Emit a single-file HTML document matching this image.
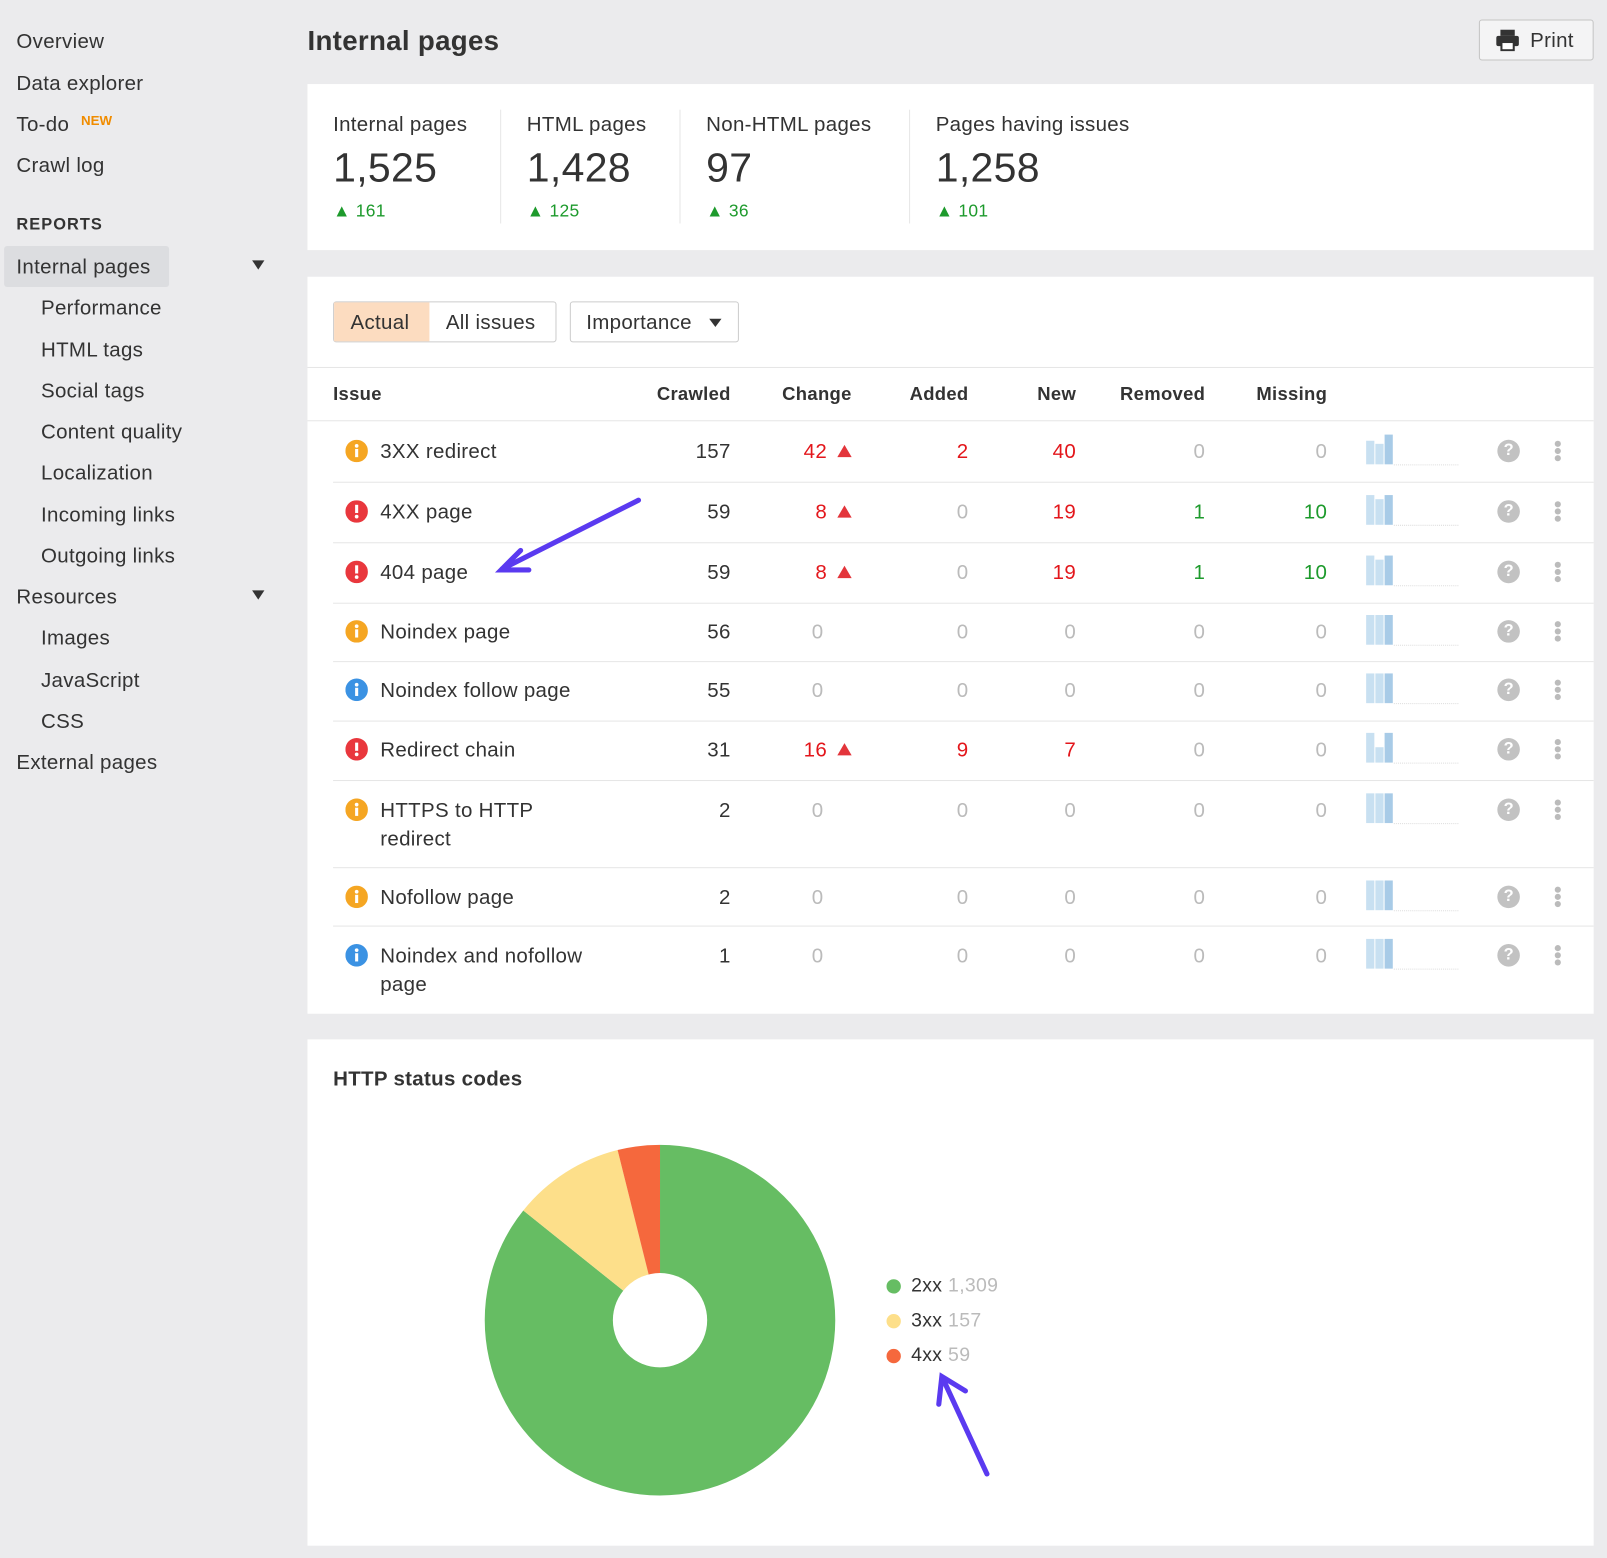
<!DOCTYPE html>
<html><head><meta charset="utf-8"><style>
html,body{margin:0;padding:0;background:#ebebed;width:1607px;height:1558px;overflow:hidden}
#w{position:absolute;left:0;top:0;width:1568px;height:1520px;transform:scale(1.02487,1.025);transform-origin:0 0;font-family:"Liberation Sans",Arial,sans-serif;color:#333;letter-spacing:0.3px}
.a{position:absolute;white-space:nowrap}
.s{font-size:20px;line-height:24px;margin-top:1px}
.card{position:absolute;background:#fff;left:300px;width:1255px}
.r{text-align:right}
.red{color:#e3161b}.grn{color:#1d9a2c}.z{color:#bbb}
.hd{font-weight:bold;font-size:18px}
.line{position:absolute;height:1px;background:#e6e6e6}
.tri{display:inline-block;width:0;height:0;border-left:7px solid transparent;border-right:7px solid transparent;border-bottom:12px solid #e3353b;margin-left:10px;vertical-align:1px}
</style></head><body><div id="w">
<div class="a s" style="left:16px;top:28px">Overview</div>
<div class="a s" style="left:16px;top:69px">Data explorer</div>
<div class="a s" style="left:16px;top:109px">To-do</div>
<div class="a" style="left:79px;top:110px;color:#f08c00;font-size:13px;font-weight:bold;letter-spacing:0">NEW</div>
<div class="a s" style="left:16px;top:149px">Crawl log</div>
<div class="a" style="left:16px;top:211px;font-size:16px;font-weight:bold;letter-spacing:1px">REPORTS</div>
<div class="a" style="left:4px;top:240px;width:161px;height:40px;background:#dcdde0;border-radius:3px"></div>
<div class="a s" style="left:16px;top:248px">Internal pages</div>
<div class="a" style="left:246px;top:254px;border-left:6px solid transparent;border-right:6px solid transparent;border-top:9px solid #333"></div>
<div class="a s" style="left:40px;top:288px">Performance</div>
<div class="a s" style="left:40px;top:329px">HTML tags</div>
<div class="a s" style="left:40px;top:369px">Social tags</div>
<div class="a s" style="left:40px;top:409px">Content quality</div>
<div class="a s" style="left:40px;top:449px">Localization</div>
<div class="a s" style="left:40px;top:490px">Incoming links</div>
<div class="a s" style="left:40px;top:530px">Outgoing links</div>
<div class="a s" style="left:16px;top:570px">Resources</div>
<div class="a" style="left:246px;top:576px;border-left:6px solid transparent;border-right:6px solid transparent;border-top:9px solid #333"></div>
<div class="a s" style="left:40px;top:610px">Images</div>
<div class="a s" style="left:40px;top:651px">JavaScript</div>
<div class="a s" style="left:40px;top:691px">CSS</div>
<div class="a s" style="left:16px;top:731px">External pages</div>

<div class="a" style="left:300px;top:25px;font-size:27px;font-weight:bold;color:#333">Internal pages</div>
<div class="a" style="left:1443px;top:19px;width:110px;height:38px;border:1px solid #c4c4c4;border-radius:3px;background:#f4f4f5"></div>
<svg class="a" style="left:1459px;top:28px" width="24" height="22" viewBox="0 0 24 22"><rect x="5" y="1" width="14" height="6" fill="#333"/><rect x="1" y="7" width="22" height="10" rx="2" fill="#333"/><rect x="6" y="13" width="12" height="8" fill="#fff" stroke="#333" stroke-width="2"/></svg>
<div class="a s" style="left:1493px;top:27px">Print</div>

<div class="card" style="top:82px;height:162px"></div>
<div class="a s" style="left:325px;top:109px">Internal pages</div>
<div class="a s" style="left:514px;top:109px">HTML pages</div>
<div class="a s" style="left:689px;top:109px">Non-HTML pages</div>
<div class="a s" style="left:913px;top:109px">Pages having issues</div>
<div class="a" style="left:325px;top:142px;font-size:40px">1,525</div>
<div class="a" style="left:514px;top:142px;font-size:40px">1,428</div>
<div class="a" style="left:689px;top:142px;font-size:40px">97</div>
<div class="a" style="left:913px;top:142px;font-size:40px">1,258</div>
<div class="a grn" style="left:325px;top:196px;font-size:17px">▲ 161</div>
<div class="a grn" style="left:514px;top:196px;font-size:17px">▲ 125</div>
<div class="a grn" style="left:689px;top:196px;font-size:17px">▲ 36</div>
<div class="a grn" style="left:913px;top:196px;font-size:17px">▲ 101</div>
<div class="a" style="left:488px;top:107px;width:1px;height:111px;background:#e6e6e6"></div>
<div class="a" style="left:663px;top:107px;width:1px;height:111px;background:#e6e6e6"></div>
<div class="a" style="left:887px;top:107px;width:1px;height:111px;background:#e6e6e6"></div>

<div class="card" style="top:270px;height:719px"></div>
<div class="a" style="left:325px;top:294px;width:216px;height:38px;border:1px solid #ccc;border-radius:3px"></div>
<div class="a" style="left:326px;top:295px;width:93px;height:38px;background:#fcdcc0"></div>
<div class="a s" style="left:342px;top:302px">Actual</div>
<div class="a s" style="left:435px;top:302px">All issues</div>
<div class="a" style="left:556px;top:294px;width:163px;height:38px;border:1px solid #ccc;border-radius:3px"></div>
<div class="a s" style="left:572px;top:302px">Importance</div>
<div class="a" style="left:692px;top:311px;border-left:6px solid transparent;border-right:6px solid transparent;border-top:8px solid #333"></div>
<div class="line" style="left:300px;top:358px;width:1255px"></div>
<div class="a hd r" style="left:325px;top:374px">Issue</div>
<div class="a hd r" style="left:600px;width:113px;top:374px">Crawled</div>
<div class="a hd r" style="left:700px;width:131px;top:374px">Change</div>
<div class="a hd r" style="left:840px;width:105px;top:374px">Added</div>
<div class="a hd r" style="left:950px;width:100px;top:374px">New</div>
<div class="a hd r" style="left:1060px;width:116px;top:374px">Removed</div>
<div class="a hd r" style="left:1180px;width:115px;top:374px">Missing</div>
<div class="line" style="left:300px;top:410px;width:1255px"></div>
<div id="rows"></div>

<div class="card" style="top:1014px;height:494px"></div>
<div class="a" style="left:325px;top:1042px;font-size:20px;font-weight:bold">HTTP status codes</div>
<svg class="a" style="left:0;top:0" width="1568" height="1520">
<path d="M644,1288 L644,1117 A171,171 0 1 1 510.6,1181 Z" fill="#66bd63"/>
<path d="M644,1288 L510.6,1181 A171,171 0 0 1 602.6,1122 Z" fill="#fddf8a"/>
<path d="M644,1288 L602.6,1122 A171,171 0 0 1 644,1117 Z" fill="#f5683d"/>
<circle cx="644" cy="1288" r="46" fill="#fff"/>
<circle cx="872" cy="1255" r="7" fill="#66bd63"/><circle cx="872" cy="1289" r="7" fill="#fddf8a"/><circle cx="872" cy="1323" r="7" fill="#f5683d"/>
<g stroke="#5a3af0" stroke-width="5" stroke-linecap="round" fill="none">
<path d="M623,488 L490,555"/><path d="M508,537 L489,556 L516,556"/>
<path d="M963,1438 L920,1345"/><path d="M916,1370 L919,1343 L942,1357"/></g>
</svg>
<div class="a" style="left:889px;top:1244px;font-size:19px">2xx <span class="z">1,309</span></div>
<div class="a" style="left:889px;top:1278px;font-size:19px">3xx <span class="z">157</span></div>
<div class="a" style="left:889px;top:1312px;font-size:19px">4xx <span class="z">59</span></div>
</div>
<script>
var R=[["o","3XX redirect","157","42","2","40","0","0",440,[0.8,0.7,1]],
["r","4XX page","59","8","0","19","1","10",499,[1,0.85,1]],
["r","404 page","59","8","0","19","1","10",558,[1,0.85,1]],
["o","Noindex page","56","0","0","0","0","0",616,[1,1,1]],
["b","Noindex follow page","55","0","0","0","0","0",673,[1,1,1]],
["r","Redirect chain","31","16","9","7","0","0",731,[1,0.5,1]],
["o","HTTPS to HTTP<br>redirect","2","0","0","0","0","0",790,[1,1,1]],
["o","Nofollow page","2","0","0","0","0","0",875,[1,1,1]],
["b","Noindex and nofollow<br>page","1","0","0","0","0","0",932,[1,1,1]]];
var seps=[470,529,588,645,703,761,846,903];
var h="";
seps.forEach(function(y){h+='<div class="line" style="left:325px;top:'+y+'px;width:1230px"></div>'});
R.forEach(function(r){var y=r[8],t=y-12;
var col={o:"#f5a623",r:"#e9373d",b:"#3b92e3"}[r[0]];
h+='<svg class="a" style="left:337px;top:'+(y-11)+'px" width="22" height="22"><circle cx="11" cy="11" r="11" fill="'+col+'"/>'+(r[0]=="r"?'<rect x="9.5" y="4.5" width="3" height="8" fill="#fff"/><circle cx="11" cy="16" r="1.8" fill="#fff"/>':'<circle cx="11" cy="6" r="1.8" fill="#fff"/><rect x="9.5" y="9" width="3" height="8" fill="#fff"/>')+'</svg>';
h+='<div class="a s" style="left:371px;top:'+t+'px;line-height:28px;margin-top:-1px">'+r[1]+'</div>';
h+='<div class="a s r" style="left:600px;width:113px;top:'+t+'px">'+r[2]+'</div>';
if(r[3]!="0")h+='<div class="a s r red" style="left:700px;width:131px;top:'+t+'px">'+r[3]+'<span class="tri"></span></div>';
else h+='<div class="a s z" style="left:792px;top:'+t+'px">0</div>';
function c(v,x,w,g){var cl=v=="0"?"z":(g?"grn":"red");return '<div class="a s r '+cl+'" style="left:'+x+'px;width:'+w+'px;top:'+t+'px">'+v+'</div>'}
h+=c(r[4],840,105,0)+c(r[5],950,100,0)+c(r[6],1060,116,1)+c(r[7],1180,115,1);
var cols=["#c8e0f1","#c8e0f1","#a8cbe7"];
for(var i=0;i<3;i++){var hh=Math.round(29*r[9][i]);h+='<div class="a" style="left:'+(1333+i*9)+'px;top:'+(y+13-hh)+'px;width:8px;height:'+hh+'px;background:'+cols[i]+'"></div>'}
h+='<div class="a" style="left:1360px;top:'+(y+13)+'px;width:63px;border-top:1px dotted #ddd"></div>';
h+='<div class="a" style="left:1461px;top:'+(y-11)+'px;width:22px;height:22px;border-radius:50%;background:#c2c2c2;color:#fff;font-weight:bold;font-size:16px;text-align:center;line-height:22px;letter-spacing:0">?</div>';
for(var k=0;k<3;k++)h+='<div class="a" style="left:1517px;top:'+(y-10+k*7)+'px;width:6px;height:6px;border-radius:50%;background:#bbb"></div>';
});
document.getElementById("rows").innerHTML=h;
</script>
</body></html>
